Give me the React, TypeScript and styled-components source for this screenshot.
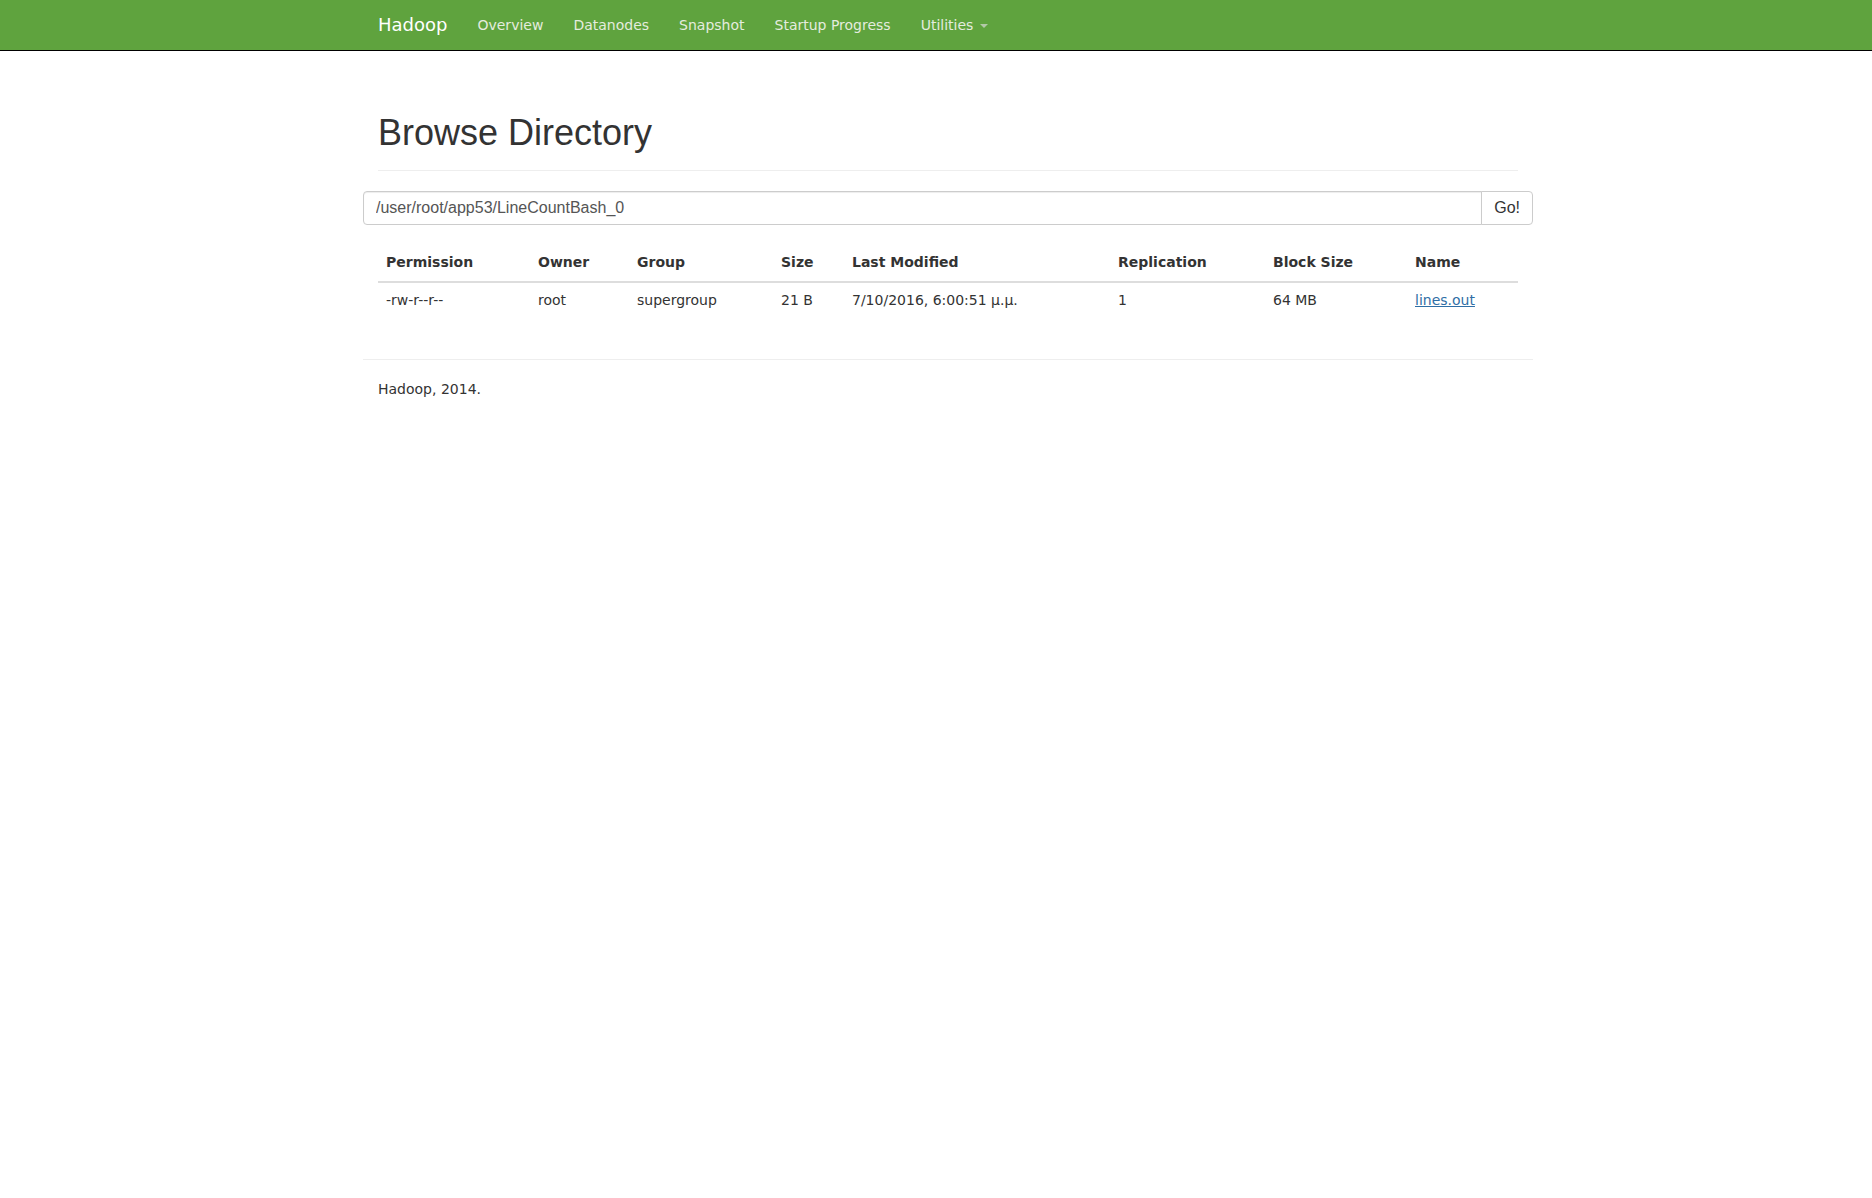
import React from 'react';
import styled, { createGlobalStyle } from 'styled-components';

const GlobalStyle = createGlobalStyle`
  * {
    box-sizing: border-box;
  }
  body {
    margin: 0;
    background: #fff;
    color: #333;
    font-family: "DejaVu Sans", sans-serif;
    font-size: 14px;
    line-height: 1.428571;
  }
`;

const Navbar = styled.nav`
  background-color: #5fa33e;
  border-bottom: 1px solid #000;
  margin-bottom: 20px;
`;

const Container = styled.div`
  width: 1170px;
  margin-left: calc(50% - 573px);
  padding: 0 15px;
`;

const NavInner = styled(Container)`
  display: flex;
  align-items: center;
  height: 50px;
`;

const Brand = styled.a`
  margin-left: -15px;
  padding: 15px;
  font-size: 18px;
  line-height: 20px;
  color: #fff;
  text-decoration: none;
`;

const NavLink = styled.a`
  padding: 15px;
  line-height: 20px;
  color: #e4ecdf;
  text-decoration: none;
`;

const Caret = styled.span`
  display: inline-block;
  width: 0;
  height: 0;
  margin-left: 7px;
  vertical-align: middle;
  border-top: 4px solid #b3c9a8;
  border-left: 4px solid transparent;
  border-right: 4px solid transparent;
`;

const Main = styled(Container)`
  padding-top: 42px;
`;

const PageHeader = styled.div`
  padding-bottom: 7px;
  margin-bottom: 20px;
  border-bottom: 1px solid #eee;
`;

const Title = styled.h1`
  margin: 0 0 10px;
  font-family: "Liberation Sans", Arial, sans-serif;
  font-size: 36px;
  font-weight: 500;
  line-height: 1.1;
  color: #333;
`;

const InputGroup = styled.div`
  display: flex;
  margin: 0 -15px;
`;

const PathInput = styled.input`
  flex: 1;
  height: 34px;
  padding: 6px 12px;
  font-family: "Liberation Sans", Arial, sans-serif;
  font-size: 16px;
  color: #555;
  background: #fff;
  border: 1px solid #ccc;
  border-radius: 4px 0 0 4px;
  box-shadow: inset 0 1px 1px rgba(0, 0, 0, 0.075);
  outline: none;
`;

const GoButton = styled.button`
  margin-left: -1px;
  height: 34px;
  padding: 5px 12px;
  font-family: "Liberation Sans", Arial, sans-serif;
  font-size: 16px;
  line-height: 22px;
  color: #333;
  background: #fff;
  border: 1px solid #ccc;
  border-radius: 0 4px 4px 0;
`;

const Table = styled.table`
  width: 100%;
  margin: 20px 0 40px;
  border-collapse: collapse;
  table-layout: fixed;
`;

const Col = styled.col<{ $w: number }>`
  width: ${p => p.$w}px;
`;

const Th = styled.th`
  padding: 8px;
  text-align: left;
  vertical-align: bottom;
  font-weight: bold;
  border-bottom: 2px solid #ddd;
`;

const Td = styled.td`
  padding: 8px;
  vertical-align: top;
`;

const FileLink = styled.a`
  color: #2f6ea5;
  text-decoration: underline;
`;

const Rule = styled.hr`
  margin: 20px -15px;
  border: 0;
  border-top: 1px solid #eee;
`;

const FooterText = styled.p`
  margin: 0 0 10px;
`;

const columns: [string, number][] = [
  ['Permission', 152],
  ['Owner', 99],
  ['Group', 144],
  ['Size', 71],
  ['Last Modified', 266],
  ['Replication', 155],
  ['Block Size', 142],
  ['Name', 111],
];

const row = ['-rw-r--r--', 'root', 'supergroup', '21 B', '7/10/2016, 6:00:51 μ.μ.', '1', '64 MB'];

const App: React.FC = () => {
  return (
    <>
      <GlobalStyle />
      <Navbar>
        <NavInner>
          <Brand href="#">Hadoop</Brand>
          <NavLink href="#">Overview</NavLink>
          <NavLink href="#">Datanodes</NavLink>
          <NavLink href="#">Snapshot</NavLink>
          <NavLink href="#">Startup Progress</NavLink>
          <NavLink href="#">
            Utilities<Caret />
          </NavLink>
        </NavInner>
      </Navbar>

      <Main>
        <PageHeader>
          <Title>Browse Directory</Title>
        </PageHeader>

        <InputGroup>
          <PathInput type="text" defaultValue="/user/root/app53/LineCountBash_0" />
          <GoButton type="button">Go!</GoButton>
        </InputGroup>

        <Table>
          <colgroup>
            {columns.map(([name, w]) => (
              <Col key={name} $w={w} />
            ))}
          </colgroup>
          <thead>
            <tr>
              {columns.map(([name]) => (
                <Th key={name}>{name}</Th>
              ))}
            </tr>
          </thead>
          <tbody>
            <tr>
              {row.map((v, i) => (
                <Td key={i}>{v}</Td>
              ))}
              <Td>
                <FileLink href="#">lines.out</FileLink>
              </Td>
            </tr>
          </tbody>
        </Table>

        <Rule />
        <FooterText>Hadoop, 2014.</FooterText>
      </Main>
    </>
  );
};

export default App;
